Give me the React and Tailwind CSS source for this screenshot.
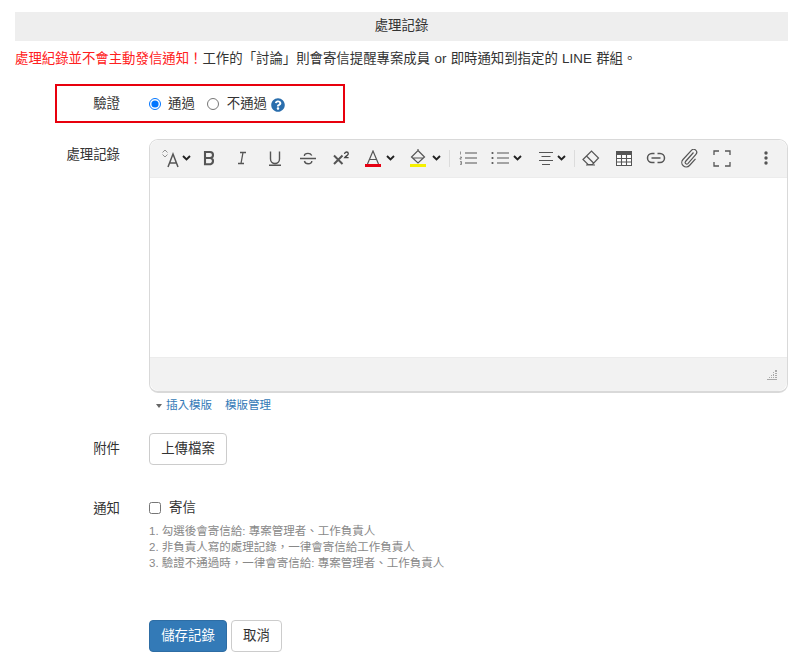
import React from "react";
import { FaQuestionCircle } from "react-icons/fa";

const stroke = "#555";

function Icon({ w = 18, h = 18, children }) {
  return (
    <svg width={w} height={h} viewBox={`0 0 ${w} ${h}`} fill="none" stroke={stroke} strokeWidth="1.4">
      {children}
    </svg>
  );
}

function Chevron() {
  return (
    <svg width="9" height="6" viewBox="0 0 9 6" fill="none" stroke="#222" strokeWidth="1.9">
      <path d="M1 1l3.5 3.5L8 1" />
    </svg>
  );
}

function Tool({ className = "w-[33px]", children }) {
  return <div className={`flex items-center justify-center h-[36px] shrink-0 ${className}`}>{children}</div>;
}

function Toolbar() {
  return (
    <div className="flex h-[38px] bg-[#f2f2f2] rounded-t-[9px] pl-[11px] pr-[5px] border-b border-[#ececec]">
      <Tool className="w-[31px] gap-[1px] justify-start">
        <svg width="20" height="20" viewBox="0 0 20 20" fill="none" stroke={stroke} strokeWidth="1.2">
          <path d="M1.5 4.5l2.5-2.5 2.5 2.5M1.5 6.5l2.5 2.5 2.5-2.5" strokeWidth="0.8" stroke="#777" />
          <path d="M7 19l5-13 5 13M8.8 15h6.4" strokeWidth="1.5" />
        </svg>
        <Chevron />
      </Tool>
      <Tool>
        <Icon>
          <path d="M5 3h5a3 3 0 0 1 0 6H5zM5 9h5.6a3.2 3.2 0 0 1 0 6.2H5z" strokeWidth="2.1" />
        </Icon>
      </Tool>
      <Tool>
        <Icon>
          <path d="M7 3.5h6M5 14.5h6M10 3.5l-2 11" strokeWidth="1.3" />
        </Icon>
      </Tool>
      <Tool>
        <Icon>
          <path d="M4.5 2.5v7.5a4.5 4.5 0 0 0 9 0V2.5M3 16.2h12" />
        </Icon>
      </Tool>
      <Tool>
        <Icon>
          <path d="M1 9.5h16M12.8 6.5C12 5 10.6 4.4 9 4.4 7 4.4 5.4 5.3 5.4 7M5.4 12c.5 1.8 2 2.7 3.7 2.7 2 0 3.7-1 3.7-2.7" />
        </Icon>
      </Tool>
      <Tool>
        <Icon>
          <path d="M2 6.500l8.500 8.500M10.500 6.500L2 15" strokeWidth="2" />
          <path d="M12.5 5c.2-1.2 1-2 2-2s1.8.7 1.8 1.7c0 1.4-2.4 2.3-3.6 4h3.900" strokeWidth="1.3" stroke="#444" />
        </Icon>
      </Tool>

      <Tool className="w-[53px] gap-[5px] pl-[1px] justify-start">
        <div className="w-[16px] ml-[7px] flex flex-col items-center">
          <svg width="16" height="14" viewBox="0 0 16 14" fill="none" stroke={stroke} strokeWidth="1.2">
            <path d="M2.5 14L8 1l5.500 13M4.500 9.500h7" />
          </svg>
          <div className="w-[16px] h-[3px] bg-[#e60012]" />
        </div>
        <Chevron />
      </Tool>
      <Tool className="w-[38px] gap-[6px] justify-start">
        <div className="w-[16px] flex flex-col items-center">
          <svg width="16" height="15" viewBox="0 0 16 15" fill="none" stroke={stroke} strokeWidth="1.2">
            <path d="M8 1.500L14.500 8 8 14 1.500 8zM8 1.500V0M2.500 9h11" />
          </svg>
          <div className="w-[16px] h-[3px] bg-[#f5f000]" />
        </div>
        <Chevron />
      </Tool>
      <div className="w-[1px] h-[17px] bg-[#dcdcdc] mt-[10px] mr-[1px] ml-[1px]" />

      <Tool>
        <svg width="18" height="14" viewBox="0 0 18 14" fill="none" stroke={stroke} strokeWidth="1.2">
          <path d="M6 2h12M6 7h12M6 12h12" />
          <path d="M1.500 0.500v3M1 6h1.500v1H1v1.200h1.500M1 10.500h1.500v3H1M1 12h1.500" strokeWidth="0.6" />
        </svg>
      </Tool>
      <Tool className="w-[54px] gap-[4px] justify-start pl-[7px]">
        <svg width="18" height="14" viewBox="0 0 18 14" fill="none" stroke={stroke} strokeWidth="1.2">
          <path d="M6 2h12M6 7h12M6 12h12" />
          <circle cx="1.500" cy="2" r="1.100" fill={stroke} stroke="none" />
          <circle cx="1.500" cy="7" r="1.100" fill={stroke} stroke="none" />
          <circle cx="1.500" cy="12" r="1.100" fill={stroke} stroke="none" />
        </svg>
        <Chevron />
      </Tool>
      <Tool className="w-[36px] gap-[3px] justify-start">
        <svg width="16" height="14" viewBox="0 0 16 14" fill="none" stroke={stroke} strokeWidth="1.2">
          <path d="M1 1.500h14M3.500 5.500h9M1 9.500h14M4 13.500h8" />
        </svg>
        <Chevron />
      </Tool>
      <div className="w-[1px] h-[17px] bg-[#dcdcdc] mt-[10px]" />

      <Tool className="w-[32px]">
        <svg width="18" height="16" viewBox="0 0 18 16" fill="none" stroke={stroke} strokeWidth="1.2">
          <path d="M1 9.500L9.500 1l7 7-6 6.500H6zM4.500 6l7 7M4 15h9" />
        </svg>
      </Tool>
      <Tool>
        <svg width="16" height="15" viewBox="0 0 16 15" fill="none">
          <rect x="0.500" y="0.500" width="15" height="14" stroke={stroke} fill="#fff" />
          <path d="M0 1h16v3H0z" fill={stroke} />
          <path d="M0 7.500h16M0 11h16M5.500 4v11M10.500 4v11" stroke={stroke} strokeWidth="1.100" />
        </svg>
      </Tool>
      <Tool className="w-[32px]">
        <svg width="20" height="12" viewBox="0 0 20 12" fill="none" stroke={stroke} strokeWidth="1.500">
          <path d="M8.500 1.500H6a4.500 4.500 0 0 0 0 9h2.500M11.500 1.500H14a4.500 4.500 0 0 1 0 9h-2.500M5.500 6h9" />
        </svg>
      </Tool>
      <Tool>
        <svg width="18" height="19" viewBox="0 0 18 19" fill="none" stroke={stroke} strokeWidth="1.200">
          <path d="M13.500 3.500l-8 9a1.600 1.600 0 0 0 2.400 2.100l8-9.200a3 3 0 0 0-4.500-4L3 10.500a4.400 4.400 0 0 0 6.500 6l6-6.700" />
        </svg>
      </Tool>
      <Tool>
        <svg width="18" height="17" viewBox="0 0 18 17" fill="none" stroke={stroke} strokeWidth="1.300">
          <path d="M1 5V1h5M12 1h5v4M1 12v4h5M12 16h5v-4" />
        </svg>
      </Tool>
      <Tool className="w-[33px] ml-auto">
        <svg width="4" height="14" viewBox="0 0 4 14" fill="#555">
          <circle cx="2" cy="2" r="1.700" />
          <circle cx="2" cy="7" r="1.700" />
          <circle cx="2" cy="12" r="1.700" />
        </svg>
      </Tool>
    </div>
  );
}

function Editor() {
  return (
    <div className="flex-1 border border-[#d9d9d9] border-b-2 rounded-[9px] bg-white">
      <Toolbar />
      <div className="h-[179px] bg-white" />
      <div className="h-[34px] bg-[#f2f2f2] border-t border-[#ececec] rounded-b-[9px] flex items-end justify-end pr-[10px] pb-[11px]">
        <svg width="10" height="10" viewBox="0 0 10 10" fill="#aaa">
          <path d="M8 0h2v2H8zM6 2h1v1H6zM8 3h2v1H8zM4 5h1v1H4zM6 4h1v2H6zM8 5h2v1H8zM2 7h1v1H2zM4 7h1v1H4zM6 7h1v1H6zM8 7h2v1H8zM0 9h10v1H0z" />
        </svg>
      </div>
    </div>
  );
}

export default function App() {
  return (
    <div
      className="w-[800px] h-[667px] overflow-hidden bg-white text-[13.4px] text-[#333] px-[15px] pt-[12px] pr-[12px] [text-spacing-trim:space-all]"
      style={{ fontFamily: '"Liberation Sans", "Noto Sans CJK TC", sans-serif' }}
    >
      <div className="h-[29px] bg-[#eeeeee] flex items-center justify-center">處理記錄</div>

      <p className="mt-[9px] h-[18px] leading-[18px] whitespace-nowrap [word-spacing:0.6px]">
        <span className="text-[#ff2020]">處理紀錄並不會主動發信通知！</span>
        工作的「討論」則會寄信提醒專案成員 or 即時通知到指定的 LINE 群組。
      </p>

      <div className="mt-[16px] ml-[40px] w-[290px] h-[39px] border-2 border-[#e8000d] flex items-center pt-[2px]">
        <div className="w-[63px] text-right shrink-0">驗證</div>
        <label className="ml-[29px] flex items-center gap-[7px]">
          <input type="radio" name="verify" defaultChecked className="m-0 w-[12px] h-[12px]" />
          通過
        </label>
        <label className="ml-[12px] flex items-center gap-[8px]">
          <input type="radio" name="verify" className="m-0 w-[12px] h-[12px]" />
          不通過
        </label>
        <FaQuestionCircle className="ml-[4px] text-[#2a6ead] w-[14px] h-[14px]" />
      </div>

      <div className="mt-[16px] flex">
        <div className="w-[105px] text-right pt-[6px] shrink-0">處理記錄</div>
        <div className="ml-[29px] flex-1">
          <Editor />
          <div className="mt-[5px] flex items-center text-[11.5px] text-[#337ab7] pl-[7px] h-[15px]">
            <span className="w-0 h-0 border-x-[3.5px] border-x-transparent border-t-[4px] border-t-[#666] mr-[4px]" />
            <span>插入模版</span>
            <span className="ml-[13px]">模版管理</span>
          </div>
        </div>
      </div>

      <div className="mt-[20px] flex">
        <div className="w-[105px] text-right pt-[6px] shrink-0">附件</div>
        <button className="ml-[29px] w-[78px] h-[32px] bg-white border border-[#cccccc] rounded-[4px] text-[#333]">
          上傳檔案
        </button>
      </div>

      <div className="mt-[34px] flex">
        <div className="w-[105px] text-right shrink-0">通知</div>
        <div className="ml-[29px]">
          <label className="flex items-center gap-[8px] h-[18px]">
            <input type="checkbox" className="m-0 w-[12px] h-[12px]" />
            寄信
          </label>
          <div className="mt-[6px] text-[11.5px] leading-[16px] text-[#888] whitespace-nowrap">
            <div>1. 勾選後會寄信給: 專案管理者、工作負責人</div>
            <div>2. 非負責人寫的處理記錄，一律會寄信給工作負責人</div>
            <div>3. 驗證不通過時，一律會寄信給: 專案管理者、工作負責人</div>
          </div>
        </div>
      </div>

      <div className="mt-[49px] ml-[134px] flex gap-[4px]">
        <button className="w-[78px] h-[32px] bg-[#337ab7] border border-[#2e6da4] rounded-[4px] text-white">
          儲存記錄
        </button>
        <button className="w-[51px] h-[32px] bg-white border border-[#cccccc] rounded-[4px] text-[#333]">
          取消
        </button>
      </div>
    </div>
  );
}
